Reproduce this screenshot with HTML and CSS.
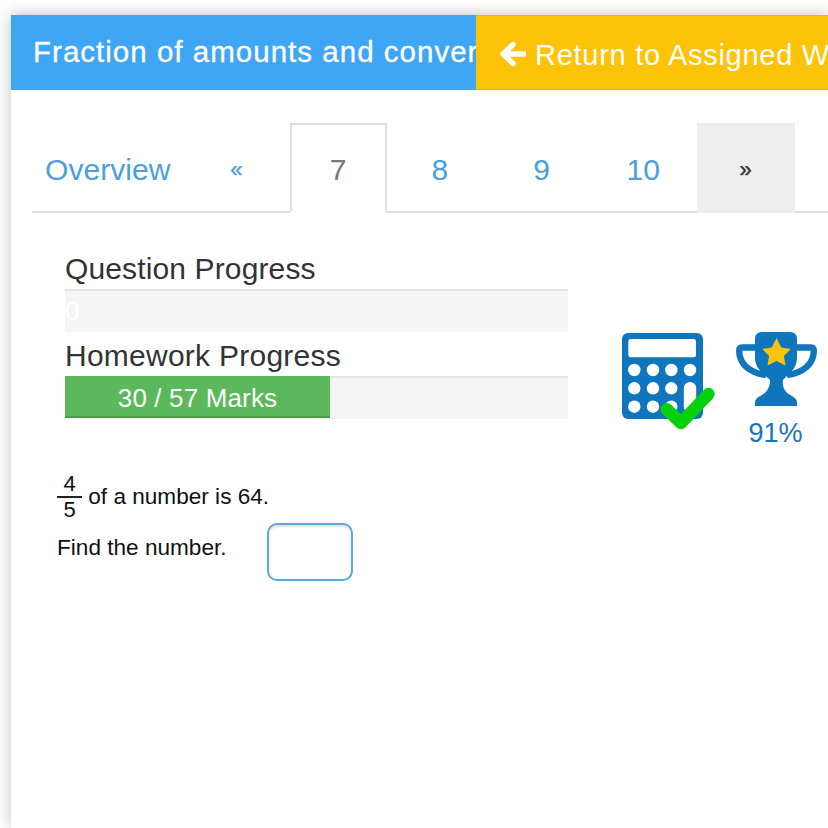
FILE: index.html
```html
<!DOCTYPE html>
<html lang="en">
<head>
<meta charset="utf-8">
<title>Fraction of amounts</title>
<link rel="stylesheet" href="styles.css">
</head>
<body>
<main class="card">
  <header class="head">
    <div class="title">Fraction of amounts and converting</div>
    <div class="back">
      <svg class="arrow" viewBox="0 0 26 26"><path d="M3 13 L13 3.5 M3 13 L13 22.5 M3 13 H24" fill="none" stroke="#fff" stroke-width="5.4" stroke-linecap="round" stroke-linejoin="round"/></svg>
      <span>Return to Assigned Work</span>
    </div>
  </header>
  <nav class="tabs">
    <a class="tab overview">Overview</a>
    <a class="tab small">«</a>
    <a class="tab active">7</a>
    <a class="tab">8</a>
    <a class="tab">9</a>
    <a class="tab">10</a>
    <a class="tab small next">»</a>
  </nav>
  <section class="stats">
    <div class="progress-col">
      <h2 class="label">Question Progress</h2>
      <div class="bar"><div class="zero">0</div></div>
      <h2 class="label second">Homework Progress</h2>
      <div class="bar"><div class="fill">30 / 57 Marks</div></div>
    </div>
    <svg class="calc" viewBox="0 0 100 100">
      <rect x="0" y="0" width="81" height="86" rx="6" fill="#0f75bd"/>
      <rect x="6.300" y="6" width="67.700" height="18.300" rx="2.5" fill="#fff"/>
      <g fill="#fff">
        <circle cx="12.300" cy="37" r="6.200"/><circle cx="31" cy="37" r="6.200"/><circle cx="49.300" cy="37" r="6.200"/><circle cx="68" cy="37" r="6.200"/>
        <circle cx="12.300" cy="55.300" r="6.200"/><circle cx="31" cy="55.300" r="6.200"/><circle cx="49.300" cy="55.300" r="6.200"/>
        <circle cx="12.300" cy="73.700" r="6.200"/><circle cx="31" cy="73.700" r="6.200"/><circle cx="49.300" cy="73.700" r="6.200"/>
        <rect x="61.800" y="49" width="12.400" height="31" rx="6.200"/>
      </g>
      <path d="M44.700 76.300 L59 90 L86.500 61" fill="none" stroke="#05d10d" stroke-width="12.500" stroke-linecap="round" stroke-linejoin="round"/>
    </svg>
    <div class="award">
      <svg class="trophy" viewBox="0 0 81 74">
        <path d="M22 15.500 H6 Q3.200 15.500 3.200 19 C3.200 32 14 41 30 43 M59 15.500 H75 Q77.800 15.500 77.800 19 C77.800 32 67 41 51 43" fill="none" stroke="#0f75bd" stroke-width="6.400"/>
        <path d="M19 7 Q19 0 26 0 H54 Q61 0 61 7 V26 C61 38 50 44 47 48 C46 54 48 60 55 63.500 Q61 66 61 71 V74 H19 V71 Q19 66 25 63.500 C32 60 34 54 34 48 C31 44 19 38 19 26 Z" fill="#0f75bd"/>
        <path d="M40.500 6 L45.200 15.600 L54.800 17 L47.900 23.900 L49.500 33.500 L40.500 28.900 L31.500 33.500 L33.100 23.900 L26.200 17 L35.800 15.600 Z" fill="#fcc30b"/>
      </svg>
      <div class="pct">91%</div>
    </div>
  </section>
  <section class="question">
    <p class="line"><span class="frac"><span class="num">4</span><span class="den">5</span></span> of a number is 64.</p>
    <div class="line find"><span class="find-text">Find the number.</span><input class="answer" type="text" aria-label="Answer"></div>
  </section>
</main>
</body>
</html>
```
FILE: styles.css
```css
* { box-sizing: border-box; }
html, body { margin: 0; height: 100%; overflow: hidden; }
body {
  width: 828px;
  height: 828px;
  padding: 15px 0 0 11px;
  background: #fff;
  font-family: "Liberation Sans", Arial, sans-serif;
  color: #333;
}
.card {
  width: 817px;
  height: 813px;
  background: #fff;
  box-shadow: 0 0 15px rgba(0, 0, 0, 0.25);
}
.head { display: flex; height: 75px; width: 817px; }
.title {
  width: 465px;
  flex: none;
  padding: 20px 0 0 22px;
  background: #3fa6f5;
  color: #fff;
  font-size: 29.5px;
  letter-spacing: 1.02px;
  line-height: 34px;
  white-space: nowrap;
  overflow: hidden;
  -webkit-text-stroke: 0.3px #fff;
}
.back {
  flex: 1;
  display: flex;
  align-items: flex-start;
  gap: 9px;
  padding: 23px 0 0 24px;
  background: #fdc307;
  border-top: 1px solid #eab318;
  border-bottom: 1px solid #e6b020;
  color: #fff;
  font-size: 29px;
  letter-spacing: 0.72px;
  line-height: 32px;
  white-space: nowrap;
  overflow: hidden;
}
.arrow { width: 26px; height: 26px; flex: none; margin-top: 2px; }
.tabs {
  display: flex;
  margin: 33px 0 0 21px;
  height: 90px;
  border-bottom: 2px solid #ddd;
  gap: 4.75px;
}
.tab {
  width: 97px;
  height: 90px;
  flex: none;
  text-align: center;
  color: #4a9fdc;
  font-size: 30px;
  line-height: 94px;
}
.overview { width: 151px; padding-left: 13px; text-align: left; letter-spacing: 0.05px; }
.small { font-size: 22px; line-height: 94px; -webkit-text-stroke: 0.4px currentColor; }
.active {
  color: #777;
  background: #fff;
  border: 2px solid #ddd;
  border-bottom: 2px solid #fff;
  line-height: 90px;
}
.next { width: 98px; color: #333; background: #eee; }
.stats { display: flex; align-items: flex-start; padding: 0 0 0 54px; height: 245px; }
.progress-col { width: 503px; flex: none; padding-top: 37px; }
.label { margin: 0; font-size: 30px; letter-spacing: 0.13px; font-weight: 400; line-height: 37px; color: #333; height: 39px; }
.second { margin-top: 5px; height: 39px; letter-spacing: 0.25px; }
.bar { height: 43px; background: #f5f5f5; box-shadow: inset 0 2px 1px rgba(0, 0, 0, 0.07); color: #fff; font-size: 26px; line-height: 44px; }
.zero { width: 0; }
.fill { width: 265px; height: 42px; background: #5cb85c; text-align: center; border-bottom: 2px solid #4b9b4b; letter-spacing: 0.15px; }
.calc { width: 100px; height: 100px; flex: none; margin: 120px 0 0 54px; }
.award { flex: none; width: 81px; margin: 119px 0 0 14px; text-align: center; }
.trophy { display: block; width: 81px; height: 74px; }
.pct { margin-top: 13px; padding-right: 2px; font-size: 27px; line-height: 28px; color: #1a75b8; }
.question { padding: 16px 0 0 46px; font-size: 22.6px; color: #111; }
.line { margin: 0; }
.frac { display: inline-block; vertical-align: middle; text-align: center; width: 25px; font-size: 22px; line-height: 24px; }
.num, .den { display: block; }
.num { border-bottom: 2px solid #222; height: 24px; line-height: 20px; }
.den { height: 24px; line-height: 23px; }
.find { display: flex; align-items: center; margin-top: 1px; }
.find-text { width: 210px; padding-bottom: 8px; }
.answer { width: 86px; height: 58px; border: 2px solid #5aa9dd; border-radius: 10px; background: #fff; box-shadow: inset 0 2px 2px rgba(0, 0, 0, 0.12); }
```
